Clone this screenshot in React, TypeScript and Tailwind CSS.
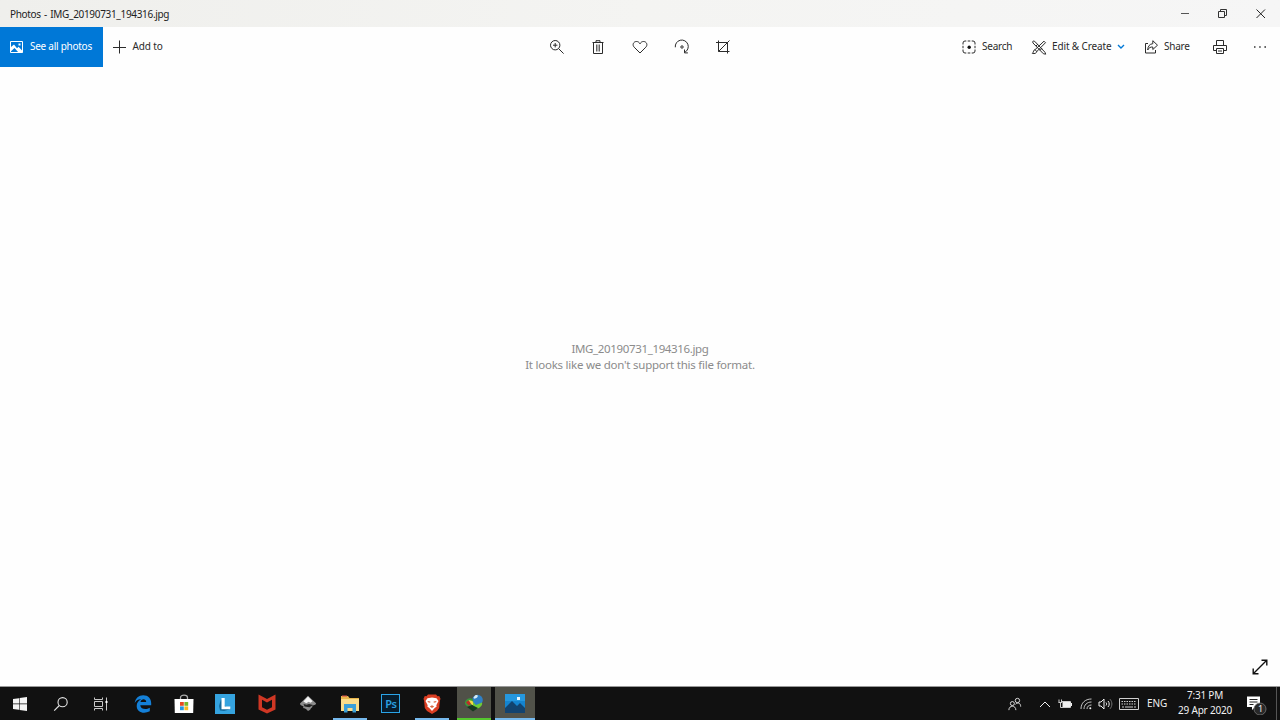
import type { ReactNode } from 'react';
import clsx from 'clsx';

type IconProps = { children: ReactNode; className?: string };

// 16x16 outline icon used by the toolbar
function LineIcon({ children, className }: IconProps) {
  return (
    <svg
      viewBox="0 0 16 16"
      fill="none"
      stroke="currentColor"
      strokeWidth="1"
      className={clsx('h-4 w-4 shrink-0', className)}
    >
      {children}
    </svg>
  );
}

function TitleBar() {
  return (
    <header className="flex h-[27px] shrink-0 items-center bg-linear-to-r from-[#efefec] via-[#f4f4f2] to-[#f6f6f6] text-[#222]">
      <span className="pt-px pl-[10px] text-[10px] tracking-[-0.32px] [word-spacing:1px]">
        Photos - IMG_20190731_194316.jpg
      </span>
      <div className="ml-auto flex">
        <div className="flex w-[38px] justify-center">
          <LineIcon className="text-[#555]"><path d="M4 7.5h8" /></LineIcon>
        </div>
        <div className="flex w-[38px] justify-center">
          <LineIcon className="text-[#333]"><path d="M3.5 5.5h6v6h-6zM5.5 5.300V3.500h6v6H10" /></LineIcon>
        </div>
        <div className="flex w-[38px] justify-center">
          <LineIcon><path d="M3.500 3.500l8.500 8.500M12 3.500L3.500 12" /></LineIcon>
        </div>
      </div>
    </header>
  );
}

function Toolbar() {
  return (
    <nav className="grid h-10 shrink-0 grid-cols-[536px_208px_1fr] text-[10px] text-[#2b2b2b]">
      <div className="flex items-center">
        <button className="flex h-full w-[103px] items-center bg-[#0078d7] pl-[9px] text-white">
          <svg viewBox="0 0 16 16" className="h-4 w-4 shrink-0">
            <path d="M1.5 2.5h12v11h-12z" fill="none" stroke="#fff" />
            <path d="M2 12V8l3-2.5 3 3.7 1.6-1.5 3.9 4.3v1.5H9.5L5.5 9 2 12.2z" fill="#fff" />
            <path d="M9.5 4.5h2v2h-2z" fill="#fff" />
          </svg>
          <span className="ml-[5px] pb-px whitespace-nowrap tracking-[-0.26px]">See all photos</span>
        </button>
        <button className="flex items-center pl-[8px]">
          <LineIcon><path d="M8.5 1.5v13M2 8.500h13" /></LineIcon>
          <span className="ml-[5.5px] pb-px tracking-[-0.15px]">Add to</span>
        </button>
      </div>

      <div className="grid grid-cols-5 place-items-center">
        <LineIcon>
          <circle cx="6.2" cy="6.2" r="4.7" />
          <path d="M9.6 9.6l5 5M6.2 4v4.4M4 6.2h4.4" />
        </LineIcon>
        <LineIcon>
          <path d="M3.5 3.5v11h9v-11M2.5 3.5h11M6 3.3V1.700h4v1.600" />
          <path d="M6.500 5.500v7M8 5.500v7M9.500 5.500v7" stroke="#666" />
        </LineIcon>
        <LineIcon>
          <path d="M8 14L2.2 8.200C0 6 1.400 2.600 4.300 2.500 6 2.400 7.300 3.400 8 4.800c.7-1.400 2-2.400 3.700-2.300 2.900.1 4.300 3.500 2.100 5.700z" />
        </LineIcon>
        <LineIcon>
          <path d="M1.300 8.300a6.500 6.500 0 1 1 9.500 5M10.500 10.500v3.400h3.400" />
          <circle cx="8" cy="8" r="1.200" />
        </LineIcon>
        <LineIcon>
          <path d="M3.500 1.500v11h11M1 3.500h11.500v11M14.500 1.500L3.500 12.500" />
        </LineIcon>
      </div>

      <div className="flex items-center pl-[217px]">
        <button className="flex w-[71px] items-center">
          <LineIcon>
            <path d="M2 5.500V4a2 2 0 0 1 2-2h1.300M10.700 2H12a2 2 0 0 1 2 2v1.500M14 10.500V12a2 2 0 0 1-2 2h-1.300M5.300 14H4a2 2 0 0 1-2-2v-1.500M6.700 2h2.600M2 6.800v2.400M14 6.800v2.400M6.700 14h2.600" />
            <circle cx="8.200" cy="8.200" r="1.700" fill="#111" stroke="none" />
          </LineIcon>
          <span className="ml-[5px] pb-px tracking-[-0.25px]">Search</span>
        </button>
        <button className="flex w-[113px] items-center">
          <LineIcon className="-ml-px">
            <path d="M3.700 2.300l10.300 11M2 4l10.300 10.700M3.700 2.300C1.700 1.600 1.300 2.600 2 4M14 13.300l.7 1.900-2.400-.5M5 7l2-2M9 11.300l2-2M13 2.200l1.500 1.500-8.700 8.800-1.800-1.800zM4 10.700c-2 .3-.9 2.300-2.700 3.700 2.300.6 4.400-.2 4.500-2.200" />
          </LineIcon>
          <span className="ml-[5px] pb-px whitespace-nowrap tracking-[-0.13px]">Edit &amp; Create</span>
          <svg viewBox="0 0 8 6" className="ml-[6px] h-[6px] w-2 shrink-0" fill="none" stroke="#0078d7" strokeWidth="1.4">
            <path d="M1 1l3 3 3-3" />
          </svg>
        </button>
        <button className="flex w-[68px] items-center">
          <LineIcon className="-ml-[2px]">
            <path d="M5 4.500H2.500v9.500h10v-3M9.800 1.700l4.700 4.500-4.700 4.300V8C7.500 7.800 5.800 8.800 4.700 11c.2-3.700 1.800-6 5.100-6.300z" />
          </LineIcon>
          <span className="ml-[5px] pb-px tracking-[-0.250px]">Share</span>
        </button>
        <LineIcon className="-ml-px">
          <path d="M4.500 6.500v-5h7v5M4 11.500H1.500v-5h13v5H12M4.500 9.500h7v5h-7zM6 12h4" />
        </LineIcon>
        <svg viewBox="0 0 14 4" className="ml-[25px] h-1 w-[14px]" fill="#333">
          <path d="M1 1.300h1.500v1.500H1zM6.200 1.300h1.500v1.500H6.200zM11.400 1.300H13v1.500h-1.600z" />
        </svg>
      </div>
    </nav>
  );
}

function Viewer() {
  return (
    <main className="relative flex min-h-0 flex-1 flex-col items-center bg-[#fefefe] pt-[274px] text-[11.5px] leading-4 text-[#8b8b8b]">
      <p className="tracking-[-0.35px]">IMG_20190731_194316.jpg</p>
      <p className="tracking-[-0.24px]">It looks like we don't support this file format.</p>
      <svg viewBox="0 0 16 16" className="absolute right-3 bottom-[11px] h-4 w-4" fill="none" stroke="#111" strokeWidth="1.4">
        <path d="M1.5 14.5l13-13M9.5 1.2h5.3v5.3M1.2 9.5v5.3h5.3" />
      </svg>
    </main>
  );
}

type TaskItem = { name: string; icon: ReactNode; cell?: string; line?: string };

const systemItems: TaskItem[] = [
  {
    name: 'Start',
    icon: (
      <svg viewBox="0 0 14 14" className="h-[14px] w-[14px]" fill="#f4f4f4">
        <path d="M0 2l6-.8v5.4H0zM6.6 1.1L14 0v6.6H6.6zM0 7.3h6v5.4L0 12zM6.6 7.3H14V14l-7.4-1.1z" />
      </svg>
    ),
  },
  {
    name: 'Search',
    icon: (
      <svg viewBox="0 0 16 16" className="h-4 w-4" fill="none" stroke="#e5e5e5" strokeWidth="1.1">
        <circle cx="9.6" cy="6.2" r="4.6" />
        <path d="M6.3 9.5L1.2 14.6" />
      </svg>
    ),
  },
  {
    name: 'Task view',
    icon: (
      <svg viewBox="0 0 16 16" className="mr-[2px] h-4 w-4" fill="none" stroke="#c9c9c9">
        <path d="M1.500 1.500v2h8v-2M1.500 5.500h8v5h-8zM1.500 14.500v-2h8v2M13.500 1.500v13" />
        <path d="M12.500 5h2v2h-2z" fill="#fff" stroke="none" />
      </svg>
    ),
  },
];

const appItems: TaskItem[] = [
  {
    name: 'Edge',
    icon: (
      <svg viewBox="0 0 18 18" className="h-[18px] w-[18px]">
        <path
          d="M.7 8C1.4 3 4.7.2 9.2.2c5.1 0 8 3.5 8 8v2H6.3c.2 4.2 5.9 4.8 9.5 2.6v3.5C10 19.4 2.7 17.5 2.7 11c0-3.1 1.7-5.4 4.4-6.7C3.9 4.2 1.9 5.6.7 8zm5.8-1h5.7c.1-3.7-5.2-3.7-5.7 0z"
          fill="#1480d8"
        />
      </svg>
    ),
  },
  {
    name: 'Store',
    icon: (
      <svg viewBox="0 0 20 20" className="h-5 w-5">
        <path d="M6.5 5V3.600c0-3.200 7-3.200 7 0V5" fill="none" stroke="#aaa" strokeWidth="1.3" />
        <path d="M.500 5h19l-.3 14H.800z" fill="#fff" />
        <path d="M6 8h3.800v3.800H6z" fill="#e64a22" />
        <path d="M10.400 8h3.800v3.800h-3.800z" fill="#77b82a" />
        <path d="M6 12.400h3.800v3.800H6z" fill="#2495e0" />
        <path d="M10.400 12.400h3.800v3.800h-3.800z" fill="#f7b921" />
      </svg>
    ),
  },
  {
    name: 'Lenovo',
    icon: (
      <svg viewBox="0 0 20 20" className="h-5 w-5">
        <path d="M0 0h20v20H0z" fill="#35a3df" />
        <path d="M4 12l2-7 4 7 6 3-7 2-4-.5z" fill="#126a9d" />
        <path d="M6.500 4h3.200v8.400h5.600v2.900H6.500z" fill="#fff" />
      </svg>
    ),
  },
  {
    name: 'McAfee',
    icon: (
      <svg viewBox="0 0 18 20" className="h-5 w-[18px]">
        <path d="M.5.5L9 5l8.500-4.500v15L9 19.500l-8.500-4zM4 5.700v7.600l5 2.500 5-2.500V5.700L9 8.600z" fill="#cf3724" fillRule="evenodd" />
      </svg>
    ),
  },
  {
    name: 'Inkscape',
    icon: (
      <svg viewBox="0 0 18 18" className="h-[18px] w-[18px]">
        <path d="M9 .8L17 8.300c.5 1.700-3 2-4.500 2.800 2.800.7-.7 1.600-1.300 3.700L9 16l-2-2c-1.300-.8-3.700-.8-2.600-2C6 11.300.7 10.700 1 8.500z" fill="#8d8d8d" />
        <path d="M9 1.500l4.600 4.700-2.200 1.600-1.700-1-2.400 1.500-2.900-1.700z" fill="#f5f5f5" />
        <path d="M4.500 9l3 .8 2.500-.7 4 .8-3.500 2.400-5-.8z" fill="#222" />
      </svg>
    ),
  },
  {
    name: 'File Explorer',
    line: 'bg-[#76b9ed]',
    icon: (
      <svg viewBox="0 0 20 18" className="h-[18px] w-5">
        <path d="M1 1h7l1.5 2H19v13H1z" fill="#e9b64c" />
        <path d="M2 .5h5v1.200H2z" fill="#e0594c" />
        <path d="M1 4h18v12H1z" fill="#fbdc89" />
        <path d="M4 9h12v8.500h-3.500V13h-5v4.500H4z" fill="#3a9fd8" />
      </svg>
    ),
  },
  {
    name: 'Photoshop',
    icon: (
      <div className="mb-px flex h-[19px] w-[19px] items-center justify-center border border-[#2aa4e8] bg-[#071c2c] text-[11px] leading-none font-semibold tracking-[-0.4px] text-[#2a9fe0]">
        Ps
      </div>
    ),
  },
  {
    name: 'Brave',
    line: 'bg-[#76b9ed]',
    icon: (
      <svg viewBox="0 0 18 20" className="h-5 w-[18px]">
        <path d="M5 .5h8l1.500 1.700 1.700-.1 1.300 2.700-.6 2-.7 7.300L14 17l-5 3-5-3-2.200-2.900-.7-7.300-.6-2L1.800 2l1.700.2z" fill="#da3e23" />
        <path d="M4.500 4.200L9 3.400l4.500.8L15.500 7l-2.200 4.300.4 1.300-2 1.500L9 17l-2.700-2.900-2-1.500.4-1.300L2.500 7z" fill="#fff" />
        <path d="M4.500 7l2.900.5-.2 1.300L5 8.300zM13.500 7l-2.900.5.2 1.300 2.200-.5zM6.800 12.500L9 11.300l2.200 1.200L9 14z" fill="#da6a43" />
      </svg>
    ),
  },
  {
    name: 'Download Manager',
    cell: 'bg-[#505148]',
    line: 'bg-[#55c72e]',
    icon: (
      <svg viewBox="0 0 20 20" className="h-5 w-5">
        <circle cx="13.500" cy="6" r="5.300" fill="#2f80c6" />
        <path d="M11 1.500c3-1.500 3.500 1 2 2s-3 2-3.500 0z" fill="#d8ecf5" />
        <path d="M1 8c1.500-4 6-5 8.500-2L6 13c-3-.5-5.500-2-5-5z" fill="#3a993c" />
        <path d="M2 8.500c2-3 5-2.500 5.800 0L5 11.800z" fill="#bd2f28" />
        <path d="M4.500 6l4 1 2 5-3-1.500z" fill="#f1dc42" />
        <path d="M9 8l3 3 6-2.500c.8 2-.8 4-3 5.500l-7 2 1-3z" fill="#6fcb36" />
        <path d="M3 13l5-2 6 3-5 3.500z" fill="#183a20" />
      </svg>
    ),
  },
  {
    name: 'Photos',
    cell: 'bg-[#515249]',
    line: 'bg-[#76b9ed]',
    icon: (
      <svg viewBox="0 0 20 19" className="h-[19px] w-5">
        <path d="M0 0h20v19H0z" fill="#1484cf" />
        <path d="M0 0h20v7H0z" fill="#2598df" />
        <path d="M0 14l7-7 5 5 3-3 5 5v5H0z" fill="#12436f" />
        <path d="M12 3h3v3h-3z" fill="#e9f8ff" />
      </svg>
    ),
  },
];

function TaskButton({ item, app = false }: { item: TaskItem; app?: boolean }) {
  const wide = item.name === 'Photos';
  return (
    <div className={clsx('flex shrink-0 justify-center', app ? 'w-[41.4px]' : 'w-[40.65px]')}>
      <div className={clsx('flex h-full flex-col items-center', wide ? 'w-10' : 'w-[34px]', item.cell)} title={item.name}>
        <div className="flex h-[31px] items-center justify-center pt-[2px]">{item.icon}</div>
        {item.line && <div className={clsx('h-[2px] w-full', item.line)} />}
      </div>
    </div>
  );
}

function Tray() {
  return (
    <div className="ml-auto flex items-center text-[10px] text-[#f0f0f0]">
      <LineIcon className="h-[14px] w-[14px]">
        <circle cx="10.8" cy="4" r="2.500" />
        <circle cx="5" cy="7.500" r="2.300" />
        <path d="M1 15c0-6 8-6 8 0M8.500 8.300c3.500-3 6-.8 6 2.700" />
      </LineIcon>
      <svg viewBox="0 0 12 8" className="ml-[17px] h-2 w-3" fill="none" stroke="currentColor">
        <path d="M1 7l5-5 5 5" />
      </svg>
      <svg viewBox="0 0 14 10" className="ml-[7px] h-[10px] w-[14px]" fill="none" stroke="currentColor">
        <path d="M4 2.500h8.500v6h-10V6M1 .500v3M3.500.500v3M.500 3.500h3.700M2.500 4v3" stroke="#ccc" />
        <path d="M4.500 3h8v5h-8zM13 4h1v3h-1z" fill="currentColor" stroke="none" />
      </svg>
      <svg viewBox="0 0 12 12" className="ml-2 h-3 w-3" fill="none" stroke="#c4c4c4">
        <path d="M1 11C1 5 5 1 11.500 1M4 11c0-4 3-7 7.500-7M7 11c0-2.500 1.800-4 4.500-4" />
        <circle cx="10.300" cy="10.200" r="1" fill="currentColor" stroke="none" />
      </svg>
      <svg viewBox="0 0 15 12" className="ml-[6px] h-3 w-[15px]" fill="none" stroke="currentColor">
        <path d="M1 4h2l3-3v10L3 8H1zM8 4.500c.8.8.8 2.200 0 3M10 3c1.600 1.600 1.600 4.400 0 6" />
        <path d="M12 1.200c2.500 2.800 2.500 6.800 0 9.600" stroke="#777" />
      </svg>
      <svg viewBox="0 0 20 12" className="ml-[6px] h-3 w-5" fill="none" stroke="#d0d0d0">
        <path d="M.500.500h19v11H.500z" />
        <path d="M2.500 3.500h15M2.500 6h15" strokeDasharray="1.5 1" />
        <path d="M3 9h2M6 9h8M15 9h2" />
      </svg>
      <span className="ml-2 w-[31px] tracking-[-0.1px]">ENG</span>
      <div className="flex w-[54px] flex-col items-center pb-px leading-[15px] whitespace-nowrap tracking-[-0.22px]">
        <span>7:31 PM</span>
        <span>29 Apr 2020</span>
      </div>
      <div className="relative ml-[15px] h-[22px] w-[20px]">
        <svg viewBox="0 0 20 22" className="h-full w-full">
          <path d="M0 4l1-1 1 1 1-1 1 1 1-1 1 1 1-1 1 1 1-1 1 1 1-1 1 1 1-1v11H8l-3 3v-3H0z" fill="#fff" />
          <path d="M2.500 6.500h8M2.500 9h8M2.500 11.500h4" stroke="#222" />
          <circle cx="13" cy="16" r="6" fill="#292929" stroke="#777" strokeWidth=".8" />
        </svg>
        <span className="absolute top-[10px] left-[11px] text-[9px] leading-3">1</span>
      </div>
      <div className="ml-[9px] h-[33px] w-[4px] border-l border-[#555]" />
    </div>
  );
}

export default function App() {
  return (
    <div className="flex h-[720px] w-[1280px] flex-col overflow-hidden bg-[#fefefe] font-['Noto_Sans','Open_Sans',sans-serif]">
      <TitleBar />
      <Toolbar />
      <Viewer />
      <footer className="flex h-[34px] shrink-0 border-t border-[#999] bg-[#111]">
        {systemItems.map((item) => <TaskButton key={item.name} item={item} />)}
        {appItems.map((item) => <TaskButton key={item.name} item={item} app />)}
        <Tray />
      </footer>
    </div>
  );
}
